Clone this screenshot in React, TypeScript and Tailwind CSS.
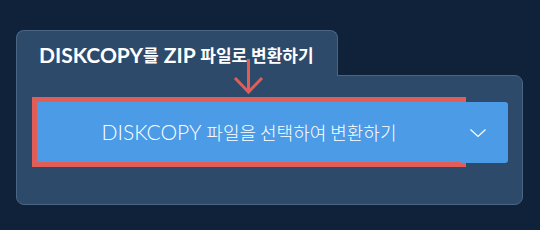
import { useState } from "react"

const ko = "font-['Noto_Sans_CJK_KR',sans-serif]"

export default function App() {
  const [open, setOpen] = useState(false)

  return (
    <div className="w-[540px] h-[230px] bg-[#10223a] pt-[30px] pl-4 font-['Lato','Noto_Sans_CJK_KR',sans-serif]">
      <div className="relative w-[507px]">
        <div className="relative z-10 -mb-px flex h-[46px] w-[322px] items-center rounded-t-lg border border-b-0 border-[#4b6585] bg-[#2d4a6b] pl-[22px] pt-[3px] text-[21px] font-bold text-white">
          DISKCOPY<span className={ko + " text-[17px] font-bold"}>를</span>&nbsp;ZIP&nbsp;
          <span className={ko + " text-[17px] font-bold"}>파일로 변환하기</span>
        </div>
        <div className="h-[130px] rounded-b-lg rounded-tr-lg border border-[#4b6585] bg-[#2d4a6b] pl-5 pr-[14px] pt-[26px]">
          <div className="flex h-[60px]">
            <button className="flex flex-1 items-center justify-center bg-[#4c9be7] text-[21px] font-light text-white outline-[5px] outline-[#e05d58] outline-solid">
              DISKCOPY&nbsp;<span className={ko + " text-[18px] font-light"}>파일을 선택하여 변환하기</span>
            </button>
            <button
              onClick={() => setOpen(!open)}
              className="flex h-[61px] w-[47px] items-center justify-center rounded-r-[3px] bg-[#4c9be7] pr-[14px]"
            >
              <svg width="18" height="10" viewBox="0 0 18 10" fill="none" stroke="white" strokeWidth="1.2">
                <polyline points="1.5,1.5 9,8.5 16.5,1.5" />
              </svg>
            </button>
          </div>
        </div>
        <svg className="absolute left-[217px] top-[27px] z-20" width="32" height="40" viewBox="0 0 32 40" fill="none" stroke="#e05d58" strokeWidth="3">
          <line x1="15.5" y1="2" x2="15.5" y2="36" />
          <polyline points="2,21 15.5,35 29,21" />
        </svg>
      </div>
    </div>
  )
}
